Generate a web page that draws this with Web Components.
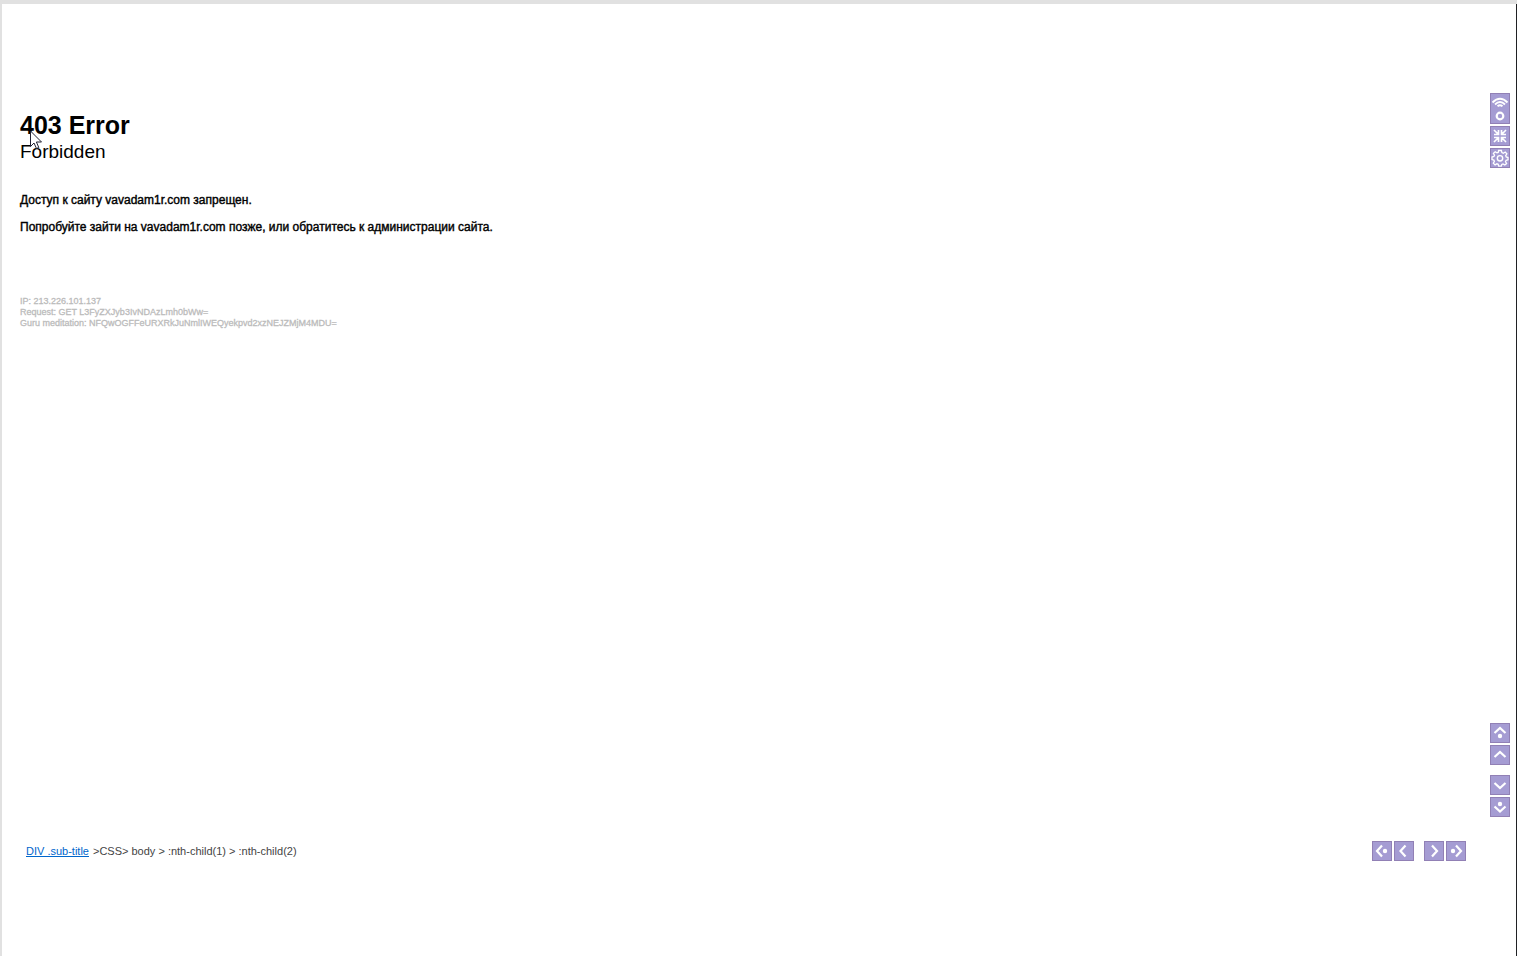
<!DOCTYPE html>
<html lang="ru">
<head>
<meta charset="utf-8">
<title>403 Error</title>
<style>
  body {
    margin: 0;
    font-family: "Liberation Sans", Arial, sans-serif;
    color: #000;
    background: #fff;
  }
</style>
</head>
<body>
<browser-frame>
  <error-message heading="403 Error" subtitle="Forbidden">
    <p>Доступ к сайту vavadam1r.com запрещен.</p>
    <p>Попробуйте зайти на vavadam1r.com позже, или обратитесь к администрации сайта.</p>
    <div slot="details">IP: 213.226.101.137</div>
    <div slot="details">Request: GET L3FyZXJyb3IvNDAzLmh0bWw=</div>
    <div slot="details">Guru meditation: NFQwOGFFeURXRkJuNmlIWEQyekpvd2xzNEJZMjM4MDU=</div>
  </error-message>

  <tool-group slot="rail" vertical>
    <tool-button icon="signal" label="Connection" tall></tool-button>
    <tool-button icon="collapse" label="Collapse"></tool-button>
    <tool-button icon="gear" label="Settings"></tool-button>
  </tool-group>
  <tool-group slot="rail" vertical>
    <tool-button icon="first-up" label="First"></tool-button>
    <tool-button icon="up" label="Up"></tool-button>
    <tool-button icon="down" label="Down" apart></tool-button>
    <tool-button icon="last-down" label="Last"></tool-button>
  </tool-group>

  <selector-path slot="status" element="DIV .sub-title">&gt;CSS&gt; body &gt; :nth-child(1) &gt; :nth-child(2)</selector-path>
  <tool-group slot="status">
    <tool-button icon="first-left" label="Parent"></tool-button>
    <tool-button icon="left" label="Previous"></tool-button>
    <tool-button icon="right" label="Next" apart></tool-button>
    <tool-button icon="last-right" label="Child"></tool-button>
  </tool-group>
</browser-frame>

<mouse-pointer></mouse-pointer>

<script>
const ICONS = {
  signal: `<path d="M1.500 8.500Q9 1 16.500 8.500M4 10.500Q9 5.500 14 10.500M6.500 12.300Q9 10.300 11.500 12.300" stroke-width="1.900"/><circle cx="9" cy="22" r="3.300"/>`,
  collapse: `<path d="M3 3L7 7M7.500 3V7.500H3M15 3L11 7M10.500 3V7.500H15M3 15L7 11M7.500 15V10.500H3M15 15L11 11M10.500 15V10.500H15" stroke-width="1.700"/>`,
  gear: `<path d="M7.600 1.500H10.400L10.900 3.600L12.300 4.200L14.200 3L15.900 4.900L14.700 6.700L15.200 8L17 8.500V10.800L15.100 11.300L14.500 12.600L15.600 14.500L13.800 16L12 14.900L10.800 15.400L10.300 17.200H7.700L7.200 15.300L5.900 14.800L4.100 15.900L2.300 14.200L3.400 12.400L2.900 11.100L1 10.500V8L2.900 7.500L3.500 6.200L2.400 4.400L4.200 2.700L6 3.800L7.200 3.400Z" stroke-width="1.300"/><circle cx="9" cy="9.300" r="2.700" stroke-width="1.400"/>`,
  "first-up": `<path d="M3.500 9L9 4L14.500 9"/><circle class="dot" cx="9" cy="12" r="2.200"/>`,
  up: `<path d="M3.500 11L9 6L14.500 11"/>`,
  down: `<path d="M3.500 7L9 12L14.500 7"/>`,
  "last-down": `<path d="M3.500 8.500L9 13.500L14.500 8.500"/><circle class="dot" cx="9" cy="6" r="2.200"/>`,
  "first-left": `<path d="M9 3.500L4 9L9 14.500"/><circle class="dot" cx="12" cy="9" r="2.200"/>`,
  left: `<path d="M10.500 3.500L5.500 9L10.500 14.500"/>`,
  right: `<path d="M7 3.500L12 9L7 14.500"/>`,
  "last-right": `<path d="M9 3.500L14 9L9 14.500"/><circle class="dot" cx="6" cy="9" r="2.200"/>`
};

class BrowserFrame extends HTMLElement {
  constructor() {
    super();

    this.attachShadow({mode: "open"}).innerHTML = `<style>
    :host {
      display: flex;
      flex-direction: column;
      gap: 24px;
      box-sizing: border-box;
      min-height: 100vh;
      padding: 89px 6px 95px 18px;
      border: solid #e1e1e1;
      border-width: 4px 0 0 2px;
      box-shadow: inset -1px 0 #202124;
    }

    .page {
      display: flex;
      flex: 1;
      padding-right: 1px;
    }

    main {
      flex: 1;
    }

    .rail {
      display: flex;
      flex-direction: column;
      justify-content: space-between;
    }

    footer {
      display: flex;
      align-items: center;
      justify-content: space-between;
      padding: 0 45px 0 6px;
    }
    </style>
    <div class="page">
      <main><slot></slot></main>
      <aside class="rail"><slot name="rail"></slot></aside>
    </div>
    <footer><slot name="status"></slot></footer>`;
  }
}

class ErrorMessage extends HTMLElement {
  constructor() {
    super();

    this.attachShadow({mode: "open"}).innerHTML = `<style>
    :host {
      display: block;
      padding-top: 16px;
      font-size: 12px;
      line-height: 15px;
    }

    h1 {
      margin: 0;
      font-size: 25px;
      line-height: 32px;
    }

    .subtitle {
      font-size: 19px;
      line-height: 22px;
    }

    .text {
      display: flex;
      flex-direction: column;
      gap: 12px;
      margin-top: 30px;
      -webkit-text-stroke: 0.4px;
    }

    ::slotted(p) {
      margin: 0;
    }

    .details {
      margin-top: 61px;
      font-size: 9px;
      line-height: 11px;
      color: #bbb;
      -webkit-text-stroke: 0.3px;
    }
    </style>
    <h1></h1>
    <div class="subtitle"></div>
    <div class="text"><slot></slot></div>
    <div class="details"><slot name="details"></slot></div>`;
  }

  connectedCallback() {
    this.shadowRoot.querySelector("h1").textContent = this.getAttribute("heading");
    this.shadowRoot.querySelector(".subtitle").textContent = this.getAttribute("subtitle");
  }
}

class ToolGroup extends HTMLElement {
  constructor() {
    super();

    this.attachShadow({mode: "open"}).innerHTML = `<style>
    :host {
      display: flex;
      gap: 2px;
    }

    :host([vertical]) {
      flex-direction: column;
    }

    :host([vertical]) ::slotted([apart]) {
      margin-top: 8px;
    }

    :host(:not([vertical])) ::slotted([apart]) {
      margin-left: 8px;
    }
    </style>
    <slot></slot>`;
  }
}

class ToolButton extends HTMLElement {
  constructor() {
    super();

    this.attachShadow({mode: "open"}).innerHTML = `<style>
    :host {
      display: block;
    }

    button {
      display: block;
      box-sizing: border-box;
      width: 20px;
      height: 20px;
      padding: 0;
      border: 1px solid #9180b5;
      background: #a59cd3;
      cursor: pointer;
    }

    :host([tall]) button {
      height: 31px;
    }

    svg {
      display: block;
      width: 100%;
      height: 100%;
      fill: none;
      stroke: #fff;
      stroke-width: 2.2;
    }

    .dot {
      fill: #fff;
      stroke: none;
    }
    </style>
    <button type="button"></button>`;
  }

  connectedCallback() {
    const button = this.shadowRoot.querySelector("button");
    const height = this.hasAttribute("tall") ? 29 : 18;
    button.setAttribute("aria-label", this.getAttribute("label"));
    button.innerHTML = `<svg viewBox="0 0 18 ${height}">${ICONS[this.getAttribute("icon")]}</svg>`;
  }
}

class SelectorPath extends HTMLElement {
  constructor() {
    super();

    this.attachShadow({mode: "open"}).innerHTML = `<style>
    :host {
      display: flex;
      gap: 4px;
      font-size: 11px;
      line-height: 14px;
      color: #444;
    }

    a {
      color: #06c;
    }
    </style>
    <a href="#"></a>
    <span><slot></slot></span>`;
  }

  connectedCallback() {
    this.shadowRoot.querySelector("a").textContent = this.getAttribute("element");
  }
}

// Floats over the page, so it is the only thing placed by coordinates
class MousePointer extends HTMLElement {
  constructor() {
    super();

    this.attachShadow({mode: "open"}).innerHTML = `<style>
    :host {
      position: absolute;
      left: 30px;
      top: 130px;
      pointer-events: none;
    }

    svg {
      display: block;
    }
    </style>
    <svg width="13" height="20" viewBox="0 0 13 20" fill="#fff" stroke="#223" stroke-width="1">
      <path d="M.5 1V16.500L4 13L6.500 18.500L8.800 17.500L6.400 12H11.500Z"/>
    </svg>`;
  }
}

customElements.define("browser-frame", BrowserFrame);
customElements.define("error-message", ErrorMessage);
customElements.define("tool-group", ToolGroup);
customElements.define("tool-button", ToolButton);
customElements.define("selector-path", SelectorPath);
customElements.define("mouse-pointer", MousePointer);
</script>
</body>
</html>
